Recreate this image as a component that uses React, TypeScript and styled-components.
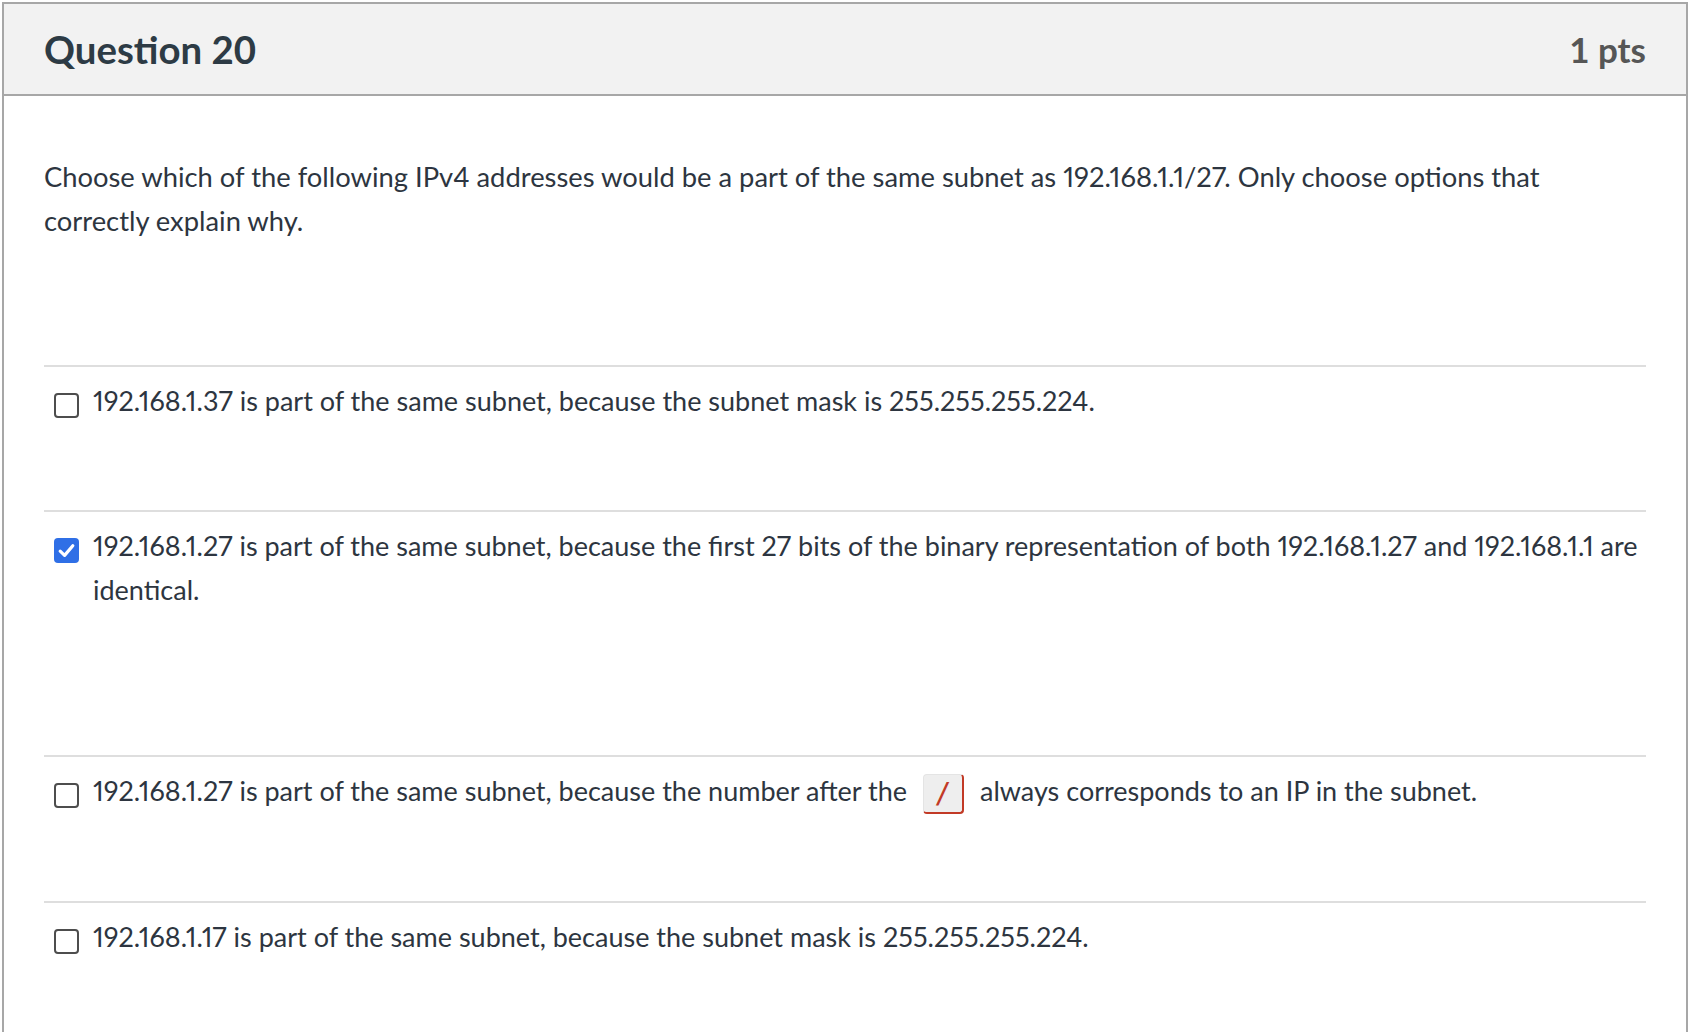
import React from "react";
import styled, { createGlobalStyle } from "styled-components";

const GlobalStyle = createGlobalStyle`
  html, body {
    margin: 0;
    padding: 0;
    background: #ffffff;
  }
  body {
    font-family: Lato, "Open Sans", "Liberation Sans", sans-serif;
    color: #2d3540;
    -webkit-font-smoothing: antialiased;
  }
  * { box-sizing: border-box; }
`;

const Panel = styled.section`
  margin: 2px 0 0 2px;
  width: 1686px;
  border: 2px solid #a7a7a7;
  border-bottom: none;
  background: #ffffff;
`;

const Header = styled.header`
  display: flex;
  align-items: center;
  justify-content: space-between;
  height: 92px;
  padding: 0 40px;
  background: #f2f2f2;
  border-bottom: 2px solid #a7a7a7;
`;

const Title = styled.h2`
  margin: 0;
  font-family: Lato, sans-serif;
  font-weight: 700;
  font-size: 38.4px;
  color: #2d3b45;
`;

const Points = styled.div`
  font-family: Lato, sans-serif;
  font-weight: 700;
  font-size: 35px;
  color: #565656;
`;

const Body = styled.div`
  padding: 59px 40px 0;
`;

const QuestionText = styled.p`
  margin: 0 0 122px;
  font-size: 27.35px;
  line-height: 44px;
  font-variant-numeric: proportional-nums;
  color: #2d3540;
`;

const AnswerList = styled.div`
  display: flex;
  flex-direction: column;
`;

const AnswerRow = styled.label<{ $bottom: number }>`
  display: flex;
  align-items: flex-start;
  gap: 14px;
  padding: 12px 0 ${(p) => p.$bottom}px 10px;
  border-top: 2px solid #dedede;
  cursor: pointer;
`;

const Box = styled.span<{ $checked?: boolean }>`
  flex: none;
  display: flex;
  align-items: center;
  justify-content: center;
  width: 25px;
  height: 25px;
  margin-top: 14px;
  border-radius: 4px;
  border: ${(p) => (p.$checked ? "none" : "2px solid #4d4d4d")};
  background: ${(p) => (p.$checked ? "#2f6fe6" : "#ffffff")};
`;

const AnswerText = styled.span`
  flex: 1;
  font-size: 27px;
  line-height: 44px;
  font-variant-numeric: proportional-nums;
  color: #2d3540;
`;

const Code = styled.span`
  display: inline-flex;
  align-items: center;
  justify-content: center;
  width: 41px;
  height: 40px;
  margin: 0 16px 0 16px;
  vertical-align: middle;
  border-radius: 4px;
  background: #eeeeee;
  border: 1px solid #e4e4e4;
  border-right: 2px solid #c23a26;
  border-bottom: 2px solid #c23a26;
  color: #c23a26;
  font-family: "DejaVu Sans Mono", "Liberation Mono", monospace;
  font-size: 28px;
  font-weight: 400;
  line-height: 1;
`;

const Check = () => (
  <svg width="19" height="19" viewBox="0 0 19 19" aria-hidden="true">
    <path
      d="M3.2 10.2 L7.6 14.4 L15.8 4.8"
      fill="none"
      stroke="#ffffff"
      strokeWidth="3.2"
      strokeLinecap="round"
      strokeLinejoin="round"
    />
  </svg>
);

type Answer = { text: React.ReactNode; checked?: boolean; bottom: number };

const answers: Answer[] = [
  {
    text: "192.168.1.37 is part of the same subnet, because the subnet mask is 255.255.255.224.",
    bottom: 87,
  },
  {
    text: "192.168.1.27 is part of the same subnet, because the first 27 bits of the binary representation of both 192.168.1.27 and 192.168.1.1 are identical.",
    checked: true,
    bottom: 143,
  },
  {
    text: (
      <>
        192.168.1.27 is part of the same subnet, because the number after the<Code>/</Code>always
        corresponds to an IP in the subnet.
      </>
    ),
    bottom: 87,
  },
  {
    text: "192.168.1.17 is part of the same subnet, because the subnet mask is 255.255.255.224.",
    bottom: 120,
  },
];

export default function App() {
  return (
    <>
      <GlobalStyle />
      <Panel>
        <Header>
          <Title>Question 20</Title>
          <Points>1 pts</Points>
        </Header>
        <Body>
          <QuestionText>
            Choose which of the following IPv4 addresses would be a part of the same subnet as
            192.168.1.1/27. Only choose options that correctly explain why.
          </QuestionText>
          <AnswerList>
            {answers.map((a, i) => (
              <AnswerRow key={i} $bottom={a.bottom}>
                <Box $checked={a.checked}>{a.checked && <Check />}</Box>
                <AnswerText>{a.text}</AnswerText>
              </AnswerRow>
            ))}
          </AnswerList>
        </Body>
      </Panel>
    </>
  );
}
